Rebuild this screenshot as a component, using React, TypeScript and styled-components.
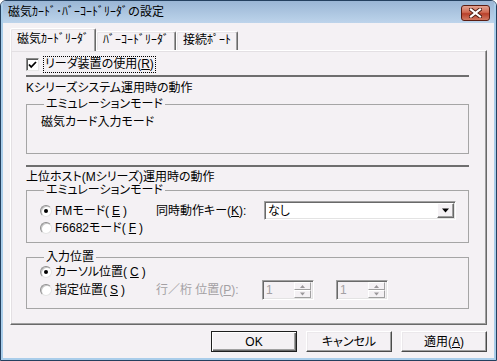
import React from 'react';
import styled, {createGlobalStyle} from 'styled-components';

const GlobalStyle = createGlobalStyle`
  html, body {
    margin: 0;
    padding: 0;
    background: #ffffff;
  }
  body {
    font-family: "Liberation Sans", "Noto Sans CJK JP", sans-serif;
    font-size: 12px;
    color: #000;
  }
  * {
    box-sizing: border-box;
  }
`;

const Window = styled.div`
  width: 497px;
  height: 361px;
  display: flex;
  flex-direction: column;
  border: 1px solid #24405f;
  border-radius: 6px 6px 0 0;
  overflow: hidden;
  background: #f4f1f4;
  font-feature-settings: "palt";
`;

const TitleBar = styled.div`
  height: 22px;
  flex: none;
  display: flex;
  align-items: center;
  justify-content: space-between;
  padding: 0 4px 0 5px;
  background: linear-gradient(#9ab6d5, #bdd4eb);
  border-left: 2px solid #a9cdea;
  border-right: 2px solid #a9cdea;
  line-height: 14px;
  font-feature-settings: normal;
`;

const CloseButton = styled.div`
  width: 29px;
  height: 16px;
  margin-top: 2px;
  border: 1px solid #5b1d12;
  border-radius: 3px;
  background: linear-gradient(#e3a493 0%, #d06a52 45%, #b8402a 55%, #d27a63 100%);
  display: flex;
  align-items: center;
  justify-content: center;
`;

const Frame = styled.div`
  flex: 1;
  display: flex;
  flex-direction: column;
  border: 2px solid #a9cdea;
  border-top: none;
  padding: 5px 7px 0 7px;
`;

const TabStrip = styled.div`
  height: 22px;
  display: flex;
  align-items: flex-end;
  position: relative;
  z-index: 1;
`;

const Tab = styled.div<{$active?: boolean}>`
  height: ${p => (p.$active ? 23 : 19)}px;
  margin-bottom: ${p => (p.$active ? -1 : 0)}px;
  padding: ${p => (p.$active ? 3 : 1)}px 6px 0;
  line-height: 14px;
  white-space: nowrap;
  font-feature-settings: normal;
  background: #f4f1f4;
  border: 1px solid;
  border-bottom: none;
  border-color: #ffffff #696969 transparent #ffffff;
  border-radius: 2px 2px 0 0;
  box-shadow: inset -1px 0 #a0a0a0, inset 1px 1px #e8e5e8;
`;

const Panel = styled.div`
  height: 275px;
  display: flex;
  flex-direction: column;
  padding: 5px 17px 0 15px;
  border: 1px solid;
  border-color: #ffffff #696969 #696969 #ffffff;
  box-shadow: inset -1px -1px #a0a0a0, inset 1px 1px #e3e0e3;
`;

const CheckRow = styled.div`
  height: 17px;
  display: flex;
  align-items: center;
`;

const CheckBox = styled.span`
  width: 13px;
  height: 13px;
  flex: none;
  background: #ffffff;
  border: 1px solid;
  border-color: #8a8a8a #e6e6e6 #e6e6e6 #8a8a8a;
  box-shadow: inset 1px 1px #5a5a5a;
  display: flex;
  align-items: center;
  justify-content: center;
`;

const FocusLabel = styled.span`
  margin-left: 4px;
  height: 17px;
  line-height: 15px;
  padding: 0 1px;
  border: 1px dotted #000;
`;

const Separator = styled.div<{$top: number}>`
  height: 2px;
  margin-top: ${p => p.$top}px;
  background: #6e6e6e;
  flex: none;
`;

const Heading = styled.div<{$top: number}>`
  line-height: 12px;
  margin-top: ${p => p.$top}px;
  white-space: nowrap;
`;

const GroupBox = styled.fieldset<{$top: number; $height: number}>`
  margin: ${p => p.$top}px 0 0;
  min-width: 0;
  height: ${p => p.$height}px;
  padding: 5px 12px 0 13px;
  border: 1px solid #a5a5a5;
  display: flex;
  flex-direction: column;
`;

const Legend = styled.legend`
  margin-left: 4px;
  padding: 0 2px;
  line-height: 12px;
  white-space: nowrap;
`;

const PlainText = styled.div`
  line-height: 14px;
  padding-left: 1px;
`;

const Row = styled.div<{$h: number}>`
  height: ${p => p.$h}px;
  display: grid;
  grid-template-columns: 116px auto 1fr;
  align-items: center;
`;

const RadioLabel = styled.label`
  display: flex;
  align-items: center;
  gap: 3px;
  white-space: nowrap;
  line-height: 14px;
`;

const Radio = styled.span<{$checked?: boolean}>`
  width: 12px;
  height: 12px;
  flex: none;
  border-radius: 50%;
  background: #ffffff;
  border: 1px solid;
  border-color: #8e8e8e #e4e4e4 #e4e4e4 #8e8e8e;
  box-shadow: inset 1px 1px #c4c4c4;
  display: flex;
  align-items: center;
  justify-content: center;
  &::after {
    content: '';
    width: 4px;
    height: 4px;
    border-radius: 50%;
    background: #000;
    display: ${p => (p.$checked ? 'block' : 'none')};
  }
`;

const FieldLabel = styled.span<{$disabled?: boolean; $w: number}>`
  width: ${p => p.$w}px;
  white-space: nowrap;
  line-height: 14px;
  color: ${p => (p.$disabled ? '#a3a0a3' : '#000')};
`;

const Combo = styled.div`
  width: 192px;
  height: 19px;
  display: flex;
  align-items: center;
  justify-content: space-between;
  padding: 0 1px 0 3px;
  background: #ffffff;
  border: 1px solid;
  border-color: #a0a0a0 #ffffff #ffffff #a0a0a0;
  box-shadow: inset 1px 1px #696969, inset -1px -1px #e3e3e3;
  line-height: 14px;
`;

const DropButton = styled.span`
  width: 17px;
  height: 15px;
  background: #f4f1f4;
  border: 1px solid;
  border-color: #ffffff #696969 #696969 #ffffff;
  box-shadow: inset -1px -1px #a0a0a0;
  display: flex;
  align-items: center;
  justify-content: center;
`;

const SpinGroup = styled.div`
  display: flex;
  gap: 22px;
`;

const Spin = styled.div`
  width: 52px;
  height: 20px;
  display: flex;
  align-items: center;
  justify-content: space-between;
  padding: 0 2px 0 3px;
  border: 1px solid;
  border-color: #a0a0a0 #ffffff #ffffff #a0a0a0;
  box-shadow: inset 1px 1px #696969, inset -1px -1px #e3e3e3;
  color: #a3a0a3;
  line-height: 14px;
`;

const SpinButtons = styled.div`
  width: 17px;
  height: 16px;
  display: flex;
  flex-direction: column;
`;

const SpinHalf = styled.span`
  flex: 1;
  border: 1px solid;
  border-color: #ffffff #a0a0a0 #a0a0a0 #ffffff;
  display: flex;
  align-items: center;
  justify-content: center;
`;

const ButtonRow = styled.div`
  margin-top: 6px;
  display: flex;
  justify-content: flex-end;
  gap: 9px;
`;

const PushButton = styled.button<{$default?: boolean}>`
  width: 86px;
  height: 21px;
  padding: 0;
  font: inherit;
  font-feature-settings: "palt";
  line-height: 14px;
  color: #000;
  background: #f4f1f4;
  border: 1px solid;
  border-color: ${p => (p.$default ? '#1e1e1e' : '#ffffff #4a4a4a #4a4a4a #ffffff')};
  box-shadow: ${p =>
    p.$default
      ? 'inset 1px 1px #ffffff, inset -1px -1px #696969, inset -2px -2px #a0a0a0'
      : 'inset -1px -1px #a0a0a0, inset 1px 1px #ebe8eb'};
`;

const CheckMark = () => (
    <svg width="9" height="8" viewBox="0 0 9 8">
        <path d="M1 3.5 L3.2 6 L8 1" fill="none" stroke="#000" strokeWidth="1.8"/>
    </svg>
);

const DownArrow = ({size = 7, color = '#000'}: {size?: number; color?: string}) => (
    <svg width={size} height={Math.ceil(size / 2) + 1} viewBox="0 0 7 4">
        <path d="M0 0 H7 L3.5 4 Z" fill={color}/>
    </svg>
);

const UpArrow = ({color = '#9a979a'}: {color?: string}) => (
    <svg width="5" height="3" viewBox="0 0 5 3">
        <path d="M0 3 H5 L2.5 0 Z" fill={color}/>
    </svg>
);

const CloseGlyph = () => (
    <svg width="13" height="10" viewBox="0 0 13 10">
        <path d="M2 1.5 L11 8.5 M11 1.5 L2 8.5" stroke="#4a1a10" strokeWidth="4" strokeLinecap="square"/>
        <path d="M2 1.5 L11 8.5 M11 1.5 L2 8.5" stroke="#ffffff" strokeWidth="2.2" strokeLinecap="square"/>
    </svg>
);

const SpinBox = ({value}: {value: string}) => (
    <Spin>
        <span>{value}</span>
        <SpinButtons>
            <SpinHalf><UpArrow/></SpinHalf>
            <SpinHalf><DownArrow size={5} color="#9a979a"/></SpinHalf>
        </SpinButtons>
    </Spin>
);

const App: React.FC = () => {
    return (
        <>
            <GlobalStyle/>
            <Window>
                <TitleBar>
                    <span>磁気ｶｰﾄﾞ･ﾊﾞｰｺｰﾄﾞﾘｰﾀﾞの設定</span>
                    <CloseButton><CloseGlyph/></CloseButton>
                </TitleBar>
                <Frame>
                    <TabStrip>
                        <Tab $active>磁気ｶｰﾄﾞﾘｰﾀﾞ</Tab>
                        <Tab>ﾊﾞｰｺｰﾄﾞﾘｰﾀﾞ</Tab>
                        <Tab>接続ﾎﾟｰﾄ</Tab>
                    </TabStrip>
                    <Panel>
                        <CheckRow>
                            <CheckBox><CheckMark/></CheckBox>
                            <FocusLabel>リーダ装置の使用(<u>R</u>)</FocusLabel>
                        </CheckRow>
                        <Separator $top={2}/>
                        <Heading $top={5}>Kシリーズシステム運用時の動作</Heading>
                        <GroupBox $top={4} $height={56}>
                            <Legend>エミュレーションモード</Legend>
                            <PlainText>磁気カード入力モード</PlainText>
                        </GroupBox>
                        <Separator $top={11}/>
                        <Heading $top={4}>上位ホスト(Mシリーズ)運用時の動作</Heading>
                        <GroupBox $top={1} $height={59}>
                            <Legend>エミュレーションモード</Legend>
                            <Row $h={19}>
                                <RadioLabel><Radio $checked/>FMモード(<u>E</u>)</RadioLabel>
                                <FieldLabel $w={108}>同時動作キー(<u>K</u>):</FieldLabel>
                                <Combo>
                                    <span>なし</span>
                                    <DropButton><DownArrow/></DropButton>
                                </Combo>
                            </Row>
                            <Row $h={16}>
                                <RadioLabel><Radio/>F6682モード(<u>F</u>)</RadioLabel>
                            </Row>
                        </GroupBox>
                        <GroupBox $top={8} $height={58}>
                            <Legend>入力位置</Legend>
                            <Row $h={16} style={{marginTop: -4}}>
                                <RadioLabel><Radio $checked/>カーソル位置(<u>C</u>)</RadioLabel>
                            </Row>
                            <Row $h={20}>
                                <RadioLabel><Radio/>指定位置(<u>S</u>)</RadioLabel>
                                <FieldLabel $w={106} $disabled>行／桁 位置(<u>P</u>):</FieldLabel>
                                <SpinGroup>
                                    <SpinBox value="1"/>
                                    <SpinBox value="1"/>
                                </SpinGroup>
                            </Row>
                        </GroupBox>
                    </Panel>
                    <ButtonRow>
                        <PushButton $default>OK</PushButton>
                        <PushButton>キャンセル</PushButton>
                        <PushButton>適用(<u>A</u>)</PushButton>
                    </ButtonRow>
                </Frame>
            </Window>
        </>
    );
};

export default App;
